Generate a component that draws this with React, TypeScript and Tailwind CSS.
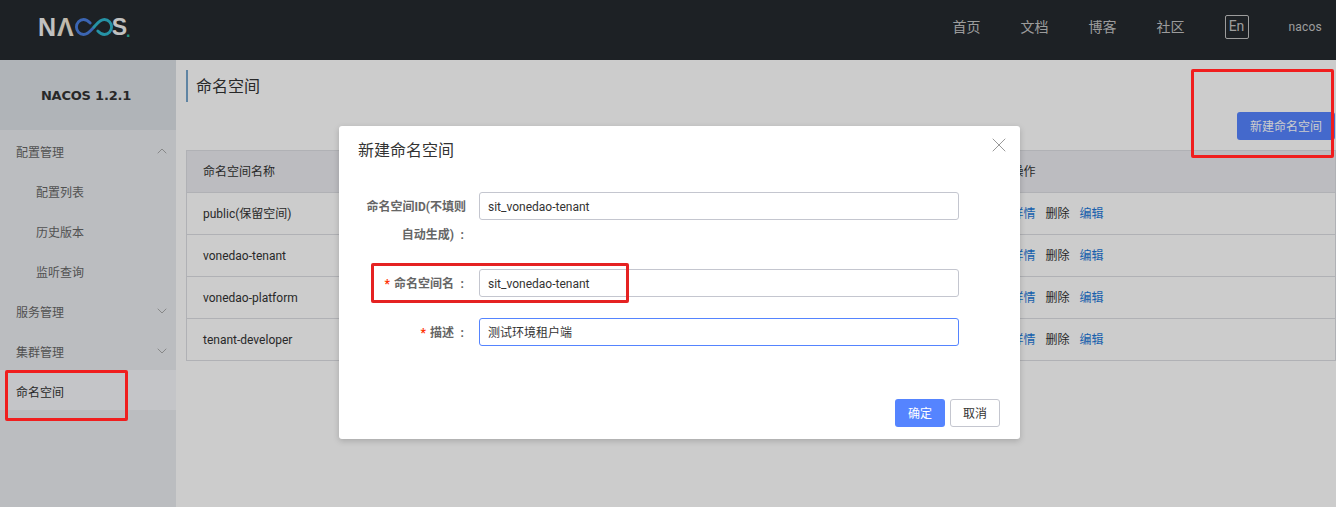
import { ChevronDown, ChevronUp, X } from "lucide-react";

const font = "font-['Roboto','Noto_Sans_CJK_SC',sans-serif]";

const rows = ["public(保留空间)", "vonedao-tenant", "vonedao-platform", "tenant-developer"];

function Logo() {
  return (
    <div className="flex items-center text-[25px] leading-none font-bold text-[#f2f2f2] font-['Liberation_Sans',sans-serif]">
      <span>N</span>
      <span className="ml-[1px] text-[#f0e8d8]">Λ</span>
      <svg width="38" height="18" viewBox="0 0 40 18" fill="none" preserveAspectRatio="none" className="ml-[1px]" aria-hidden="true">
        <path d="M16 5C14 3 12 1.500 9 1.500a7.500 7.500 0 1 0 0 15c5 0 8-4.500 11-7.500" stroke="#4a7fe0" strokeWidth="3" strokeLinecap="round" />
        <path d="M20 9c3-3 6-7.500 11-7.500a7.500 7.500 0 1 1 0 15c-3 0-5-1.500-7-3.500" stroke="#2fb8d0" strokeWidth="3" strokeLinecap="round" />
      </svg>
      <span className="-ml-[1px] text-[23px]">S</span>
      <span className="-ml-[1px] text-[#2fb8a0] text-[16px] self-end">.</span>
    </div>
  );
}

function Colon() {
  return <span className="inline-block w-[12px] text-right pr-[2px]">:</span>;
}

function Sidebar() {
  return (
    <aside className="w-[176px] shrink-0 bg-[#eaedf1] text-[12px] text-[#666]">
      <div className="h-[70px] pt-[2px] pr-[4px] bg-[#dce1e6] flex items-center justify-center font-bold text-[#333] font-['DejaVu_Sans',sans-serif]">
        <span className="text-[13px] tracking-[-0.2px]">NACOS 1.2.1</span>
      </div>
      <nav>
        <div className="h-[40px] flex items-center justify-between pt-[6px] pl-[16px] pr-[6px]">
          <span>配置管理</span>
          <ChevronUp size={16} strokeWidth={1} className="text-[#888] -mt-[4px]" />
        </div>
        <div className="h-[40px] flex items-center pt-[6px] pl-[36px]">配置列表</div>
        <div className="h-[40px] flex items-center pt-[6px] pl-[36px]">历史版本</div>
        <div className="h-[40px] flex items-center pt-[6px] pl-[36px]">监听查询</div>
        <div className="h-[40px] flex items-center justify-between pt-[6px] pl-[16px] pr-[6px]">
          <span>服务管理</span>
          <ChevronDown size={16} strokeWidth={1} className="text-[#888] -mt-[4px]" />
        </div>
        <div className="h-[40px] flex items-center justify-between pt-[6px] pl-[16px] pr-[6px]">
          <span>集群管理</span>
          <ChevronDown size={16} strokeWidth={1} className="text-[#888] -mt-[4px]" />
        </div>
        <div className="h-[40px] flex items-center pt-[6px] pl-[16px] bg-[#f6f7fb] text-[#333]">命名空间</div>
      </nav>
    </aside>
  );
}

function NamespaceList() {
  return (
    <main className="flex-1 pl-[10px] pt-[10px]">
      <div className="h-[32px] pt-[2px] border-l-2 border-[#77a6cc] pl-[8px] flex items-center text-[16px] text-[#333]">
        命名空间
      </div>
      <div className="flex justify-end mt-[10px] pr-[1px]">
        <button className="h-[28px] w-[98px] pt-[1px] rounded-[3px] bg-[#5584ff] text-[12px] text-white">新建命名空间</button>
      </div>
      <table className="w-[1150px] mt-[10px] table-fixed border-collapse border border-[#dcdee3] text-[12px] text-[#333]">
        <thead>
          <tr className="h-[42px] bg-[#ebecf0]">
            <th className="w-[809px] pl-[16px] text-left font-normal">命名空间名称</th>
            <th className="pl-[16px] text-left font-normal">操作</th>
          </tr>
        </thead>
        <tbody>
          {rows.map((name) => (
            <tr key={name} className="h-[42px] border-t border-[#dcdee3]">
              <td className="pl-[16px]">{name}</td>
              <td className="pl-[16px]">
                <span className="text-[#2077d8]">详情</span>
                <span className="ml-[10px]">删除</span>
                <span className="ml-[10px] text-[#2077d8]">编辑</span>
              </td>
            </tr>
          ))}
        </tbody>
      </table>
    </main>
  );
}

function Dialog() {
  return (
    <div className="absolute left-[339px] top-[126px] w-[681px] h-[313px] z-20 bg-white rounded-[3px] shadow-[0_2px_6px_rgba(0,0,0,0.18)] text-[12px]">
      <h2 className="pl-[19px] pt-[14px] text-[16px] leading-[22px] text-[#333]">新建命名空间</h2>
      <X size={24} strokeWidth={1} className="absolute right-[9px] top-[7px] text-[#999]" />
      <div className="mt-[30px] grid grid-cols-[127px_480px] gap-x-[13px] gap-y-[21px] text-[#666] leading-[28px]">
        <label className="text-right font-bold pt-[1px] -mb-[1px]">
          命名空间ID(不填则
          <br />
          自动生成)<Colon />
        </label>
        <input
          readOnly
          value="sit_vonedao-tenant"
          className="h-[28px] rounded-[3px] border border-[#c4c6cf] px-[8px] pt-[1px] text-[#333] outline-none"
        />
        <label className="text-right font-bold pt-[1px] -mb-[1px]">
          <span className="text-[#ff3000] mr-[4px]">*</span>命名空间名<Colon />
        </label>
        <input
          readOnly
          value="sit_vonedao-tenant"
          className="h-[28px] rounded-[3px] border border-[#c4c6cf] px-[8px] pt-[1px] text-[#333] outline-none"
        />
        <label className="text-right font-bold pt-[1px] -mb-[1px]">
          <span className="text-[#ff3000] mr-[4px]">*</span>描述<Colon />
        </label>
        <input
          readOnly
          value="测试环境租户端"
          className="h-[28px] rounded-[3px] border border-[#5584ff] px-[8px] pt-[1px] text-[#333] outline-none"
        />
      </div>
      <div className="mt-[53px] pr-[20px] flex justify-end gap-[5px]">
        <button className="h-[28px] w-[50px] pt-[1px] rounded-[3px] bg-[#5584ff] text-white">确定</button>
        <button className="h-[28px] w-[50px] pt-[1px] rounded-[3px] border border-[#c4c6cf] text-[#333]">取消</button>
      </div>
    </div>
  );
}

export default function App() {
  return (
    <div className={`relative h-[507px] w-[1336px] overflow-hidden flex flex-col bg-white ${font}`}>
      <header className="h-[60px] shrink-0 bg-[#252a2f] flex items-center justify-between pl-[38px] pr-[14px] pb-[6px]">
        <Logo />
        <div className="flex items-center text-[14px] text-[#c4c4c4]">
          <div className="flex items-center gap-[40px]">
            <span>首页</span>
            <span>文档</span>
            <span>博客</span>
            <span>社区</span>
          </div>
          <span className="ml-[40px] h-[24px] w-[24px] -mt-[1px] flex items-center justify-center border border-[#c4c4c4] rounded-[2px]">En</span>
          <span className="ml-[40px] text-[12px] tracking-[0.2px]">nacos</span>
        </div>
      </header>
      <div className="flex flex-1">
        <Sidebar />
        <NamespaceList />
      </div>

      <div className="absolute inset-0 z-10 bg-black/20" />
      <Dialog />

      <div className="absolute z-30 left-[1191px] top-[69px] w-[143px] h-[89px] border-[3px] border-[#f01e1e] rounded-[2px]" />
      <div className="absolute z-30 left-[371px] top-[263px] w-[258px] h-[40px] border-[3px] border-[#e52222] rounded-[2px]" />
      <div className="absolute z-30 left-[5px] top-[370px] w-[123px] h-[51px] border-[3px] border-[#f01e1e] rounded-[2px]" />
    </div>
  );
}
